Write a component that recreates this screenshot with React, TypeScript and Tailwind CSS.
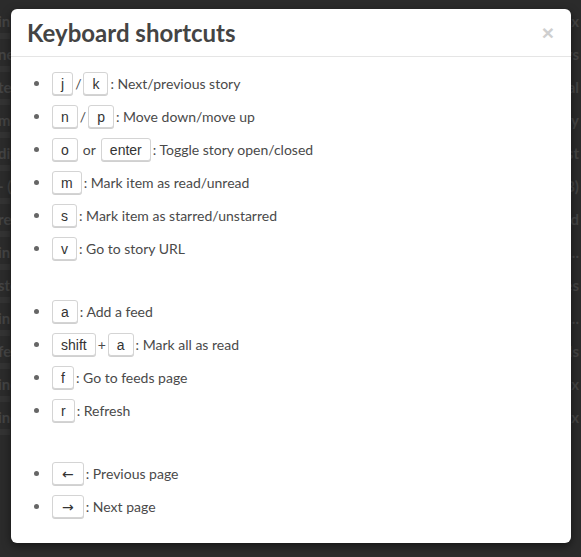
import React from 'react'

type Part = { key: string } | { sep: string }

interface Shortcut {
  keys: Part[]
  label: string
}

const GROUPS: Shortcut[][] = [
  [
    { keys: [{ key: 'j' }, { sep: '/' }, { key: 'k' }], label: 'Next/previous story' },
    { keys: [{ key: 'n' }, { sep: '/' }, { key: 'p' }], label: 'Move down/move up' },
    { keys: [{ key: 'o' }, { sep: 'or' }, { key: 'enter' }], label: 'Toggle story open/closed' },
    { keys: [{ key: 'm' }], label: 'Mark item as read/unread' },
    { keys: [{ key: 's' }], label: 'Mark item as starred/unstarred' },
    { keys: [{ key: 'v' }], label: 'Go to story URL' },
  ],
  [
    { keys: [{ key: 'a' }], label: 'Add a feed' },
    { keys: [{ key: 'shift' }, { sep: '+' }, { key: 'a' }], label: 'Mark all as read' },
    { keys: [{ key: 'f' }], label: 'Go to feeds page' },
    { keys: [{ key: 'r' }], label: 'Refresh' },
  ],
  [
    { keys: [{ key: '←' }], label: 'Previous page' },
    { keys: [{ key: '→' }], label: 'Next page' },
  ],
]

// faint page content behind the overlay
const BACKDROP = [
  'inbox', 'news', 'technical', 'may', 'digest', '- (3)', 'read', 'in ...', 'stories', 'in ...', 'feeds', 'index', 'index',
]

const isArrow = (k: string) => k === '←' || k === '→'

function Key({ children }: { children: string }) {
  return (
    <span
      className={
        isArrow(children)
          ? "inline-flex h-[23px] items-center rounded-[3px] border border-[#d4d4d4] bg-white px-[9px] text-[14px] leading-none text-[#333] shadow-[0_1px_0_#d0d0d0] [font-family:'DejaVu_Sans',sans-serif]"
          : "inline-flex h-[23px] items-center rounded-[3px] border border-[#d4d4d4] bg-white px-[8px] text-[14px] leading-none text-[#333] shadow-[0_1px_0_#d0d0d0] [font-family:'Liberation_Sans',Arial,sans-serif]"
      }
    >
      {children}
    </span>
  )
}

function Row({ item }: { item: Shortcut }) {
  return (
    <li className="flex h-[33px] items-center">
      <span className="ml-[23px] mr-[13px] h-[5px] w-[5px] rounded-full bg-[#666]" />
      {item.keys.map((p, i) =>
        'key' in p ? (
          <Key key={i}>{p.key}</Key>
        ) : (
          <span key={i} className={p.sep === 'or' ? 'mx-[5px]' : 'mx-[2px]'}>
            {p.sep}
          </span>
        ),
      )}
      <span className="ml-[2px]">: {item.label}</span>
    </li>
  )
}

export default function App() {
  return (
    <div className="relative h-[557px] w-[581px] overflow-hidden bg-[#2b2b2b] [font-family:Lato,'Open_Sans',sans-serif]">
      <div className="flex flex-col pt-[8px]">
        {BACKDROP.map((t, i) => (
          <div key={i} className="flex h-[33px] flex-col justify-center">
            <div className="-ml-[2px] flex justify-between pr-[2px] text-[15px] font-bold text-[#444]">
              <span>{t}</span>
              <span>{t}</span>
            </div>
            <div className="h-[6px] w-[10px] bg-[#333]" />
          </div>
        ))}
      </div>

      <div className="absolute left-[11px] top-[9px] flex h-[534px] w-[560px] flex-col rounded-[6px] bg-white shadow-[0_3px_9px_rgba(0,0,0,0.5)]">
        <div className="flex h-[48px] items-center justify-between border-b border-[#e5e5e5] pl-[16px] pr-[17px]">
          <h3 className="text-[24px] font-bold leading-none text-[#444]">Keyboard shortcuts</h3>
          <span className="text-[21px] font-bold leading-none text-[#cfcfcf] [font-family:'Liberation_Sans',Arial,sans-serif]">
            ×
          </span>
        </div>
        <div className="flex flex-col gap-[30px] pt-[10px] text-[14px] text-[#4a4a4a]">
          {GROUPS.map((g, gi) => (
            <ul key={gi} className="flex flex-col">
              {g.map((item, i) => (
                <Row key={i} item={item} />
              ))}
            </ul>
          ))}
        </div>
      </div>
    </div>
  )
}
